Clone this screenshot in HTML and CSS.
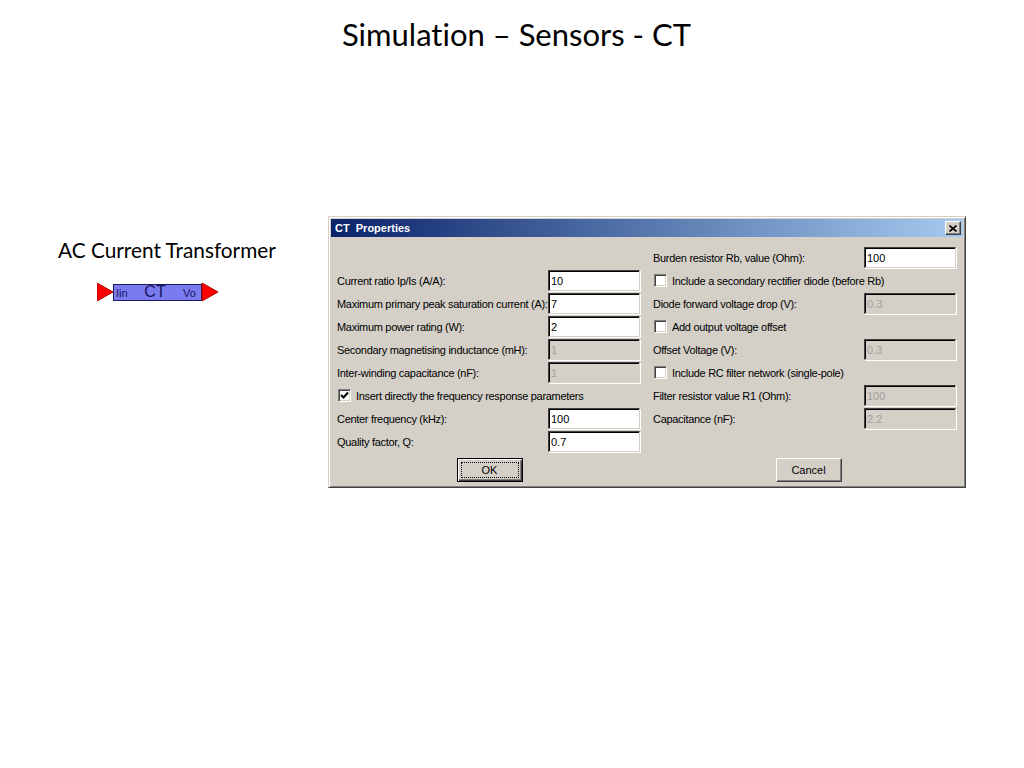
FILE: index.html
```html
<!DOCTYPE html>
<html>
<head>
<meta charset="utf-8">
<title>Simulation – Sensors - CT</title>
<link rel="stylesheet" href="styles.css">
</head>
<body>
<div class="slide">
  <h1 class="title">Simulation – Sensors - CT</h1>
  <div class="content">
    <div class="left">
      <div class="caption">AC Current Transformer</div>
      <svg class="block" width="124" height="21" viewBox="0 0 124 21">
        <polygon points="0,1 16,10 0,19" fill="#ff0000" stroke="#b00000" stroke-width="1"/>
        <rect x="16.5" y="2.5" width="88" height="16" fill="#7b7bf0" stroke="#1c1c5c" stroke-width="1"/>
        <polygon points="105,1 121,10 105,19" fill="#ff0000" stroke="#b00000" stroke-width="1"/>
        <text x="19" y="15" class="pin">Iin</text>
        <text x="58" y="15" class="blk" text-anchor="middle">CT</text>
        <text x="86" y="15" class="pin">Vo</text>
      </svg>
    </div>
    <div class="dialog">
      <div class="titlebar">
        <span class="ttext">CT&nbsp;&nbsp;Properties</span>
        <span class="close"><svg width="8" height="7" viewBox="0 0 8 7"><path d="M0.5 0.5 L7.5 6.5 M7.5 0.5 L0.5 6.5" stroke="#000" stroke-width="1.6"/></svg></span>
      </div>
      <div class="dbody">
        <div class="col">
          <div class="row"></div>
          <div class="row"><span class="lbl">Current ratio Ip/Is (A/A):</span><span class="inp">10</span></div>
          <div class="row"><span class="lbl">Maximum primary peak saturation current (A):</span><span class="inp">7</span></div>
          <div class="row"><span class="lbl">Maximum power rating (W):</span><span class="inp">2</span></div>
          <div class="row"><span class="lbl">Secondary magnetising inductance (mH):</span><span class="inp dis">1</span></div>
          <div class="row"><span class="lbl">Inter-winding capacitance (nF):</span><span class="inp dis">1</span></div>
          <div class="row chkrow"><span class="chk"><svg width="9" height="9" viewBox="0 0 9 9"><path d="M1 4 L3.5 6.5 L8 1.5" fill="none" stroke="#000" stroke-width="2"/></svg></span><span class="lbl">Insert directly the frequency response parameters</span></div>
          <div class="row"><span class="lbl">Center frequency (kHz):</span><span class="inp">100</span></div>
          <div class="row"><span class="lbl">Quality factor, Q:</span><span class="inp">0.7</span></div>
          <div class="btnrow lefts"><span class="btn def"><span class="focus">OK</span></span></div>
        </div>
        <div class="col">
          <div class="row"><span class="lbl">Burden resistor Rb, value (Ohm):</span><span class="inp">100</span></div>
          <div class="row chkrow"><span class="chk"></span><span class="lbl">Include a secondary rectifier diode (before Rb)</span></div>
          <div class="row"><span class="lbl">Diode forward voltage drop (V):</span><span class="inp dis">0.3</span></div>
          <div class="row chkrow"><span class="chk"></span><span class="lbl">Add output voltage offset</span></div>
          <div class="row"><span class="lbl">Offset Voltage (V):</span><span class="inp dis">0.3</span></div>
          <div class="row chkrow"><span class="chk"></span><span class="lbl">Include RC filter network (single-pole)</span></div>
          <div class="row"><span class="lbl">Filter resistor value R1 (Ohm):</span><span class="inp dis">100</span></div>
          <div class="row"><span class="lbl">Capacitance (nF):</span><span class="inp dis">2.2</span></div>
          <div class="row"></div>
          <div class="btnrow right"><span class="btn">Cancel</span></div>
        </div>
      </div>
    </div>
  </div>
</div>
</body>
</html>
```
FILE: styles.css
```css
* { box-sizing: border-box; }
html, body { margin: 0; padding: 0; background: #fff; }
.slide {
  width: 1024px;
  height: 768px;
  background: #fff;
  font-family: Lato, "Open Sans", sans-serif;
  font-variant-ligatures: none;
  color: #000;
  overflow: hidden;
}
.title {
  margin: 0;
  padding-top: 14px;
  padding-left: 9px;
  height: 56px;
  line-height: 40px;
  font-size: 31px;
  font-weight: normal;
  text-align: center;
}
.content {
  display: flex;
  align-items: flex-start;
  margin-top: 160px;
}
.left {
  width: 328px;
  padding-left: 58px;
  padding-top: 22px;
}
.caption {
  font-size: 20.8px;
  line-height: 24px;
  white-space: nowrap;
}
.block {
  display: block;
  margin-top: 20px;
  margin-left: 39px;
}
.pin { font-family: "Liberation Sans", Arial, sans-serif; font-size: 11px; fill: #14145a; }
.blk { font-family: "Liberation Sans", Arial, sans-serif; font-size: 16px; fill: #14145a; }

.dialog {
  width: 638px;
  height: 272px;
  background: #d4d0c8;
  border: 1px solid;
  border-color: #d4d0c8 #404040 #404040 #d4d0c8;
  box-shadow: inset 1px 1px 0 #fff, inset -1px -1px 0 #808080;
  padding: 2px;
  font-family: "Liberation Sans", Arial, sans-serif;
  font-size: 11px;
}
.titlebar {
  height: 18px;
  background: linear-gradient(to right, #0a246a, #a6caf0);
  display: flex;
  align-items: center;
  justify-content: space-between;
  padding: 0 2px 0 4px;
}
.ttext {
  color: #fff;
  font-weight: bold;
  font-size: 11px;
  white-space: nowrap;
}
.close {
  width: 16px;
  height: 14px;
  background: #d4d0c8;
  border: 1px solid;
  border-color: #fff #404040 #404040 #fff;
  box-shadow: inset -1px -1px 0 #808080;
  display: flex;
  align-items: center;
  justify-content: center;
}
.dbody {
  display: flex;
  gap: 13px;
  padding: 9px 6px 0 6px;
}
.col {
  width: 303px;
  display: flex;
  flex-direction: column;
}
.row {
  height: 23px;
  display: flex;
  align-items: center;
  justify-content: space-between;
}
.lbl {
  white-space: nowrap;
  color: #000;
  letter-spacing: -0.3px;
}
.inp {
  flex-shrink: 0;
  width: 92px;
  height: 21px;
  background: #fff;
  border: 1px solid;
  border-color: #404040 #d4d0c8 #d4d0c8 #404040;
  box-shadow: 1px 1px 0 #fff, inset 1px 1px 0 #000;
  padding: 3px 0 0 2px;
  line-height: 14px;
  color: #000;
}
.inp.dis {
  background: #d4d0c8;
  color: #a0a0a0;
}
.chkrow {
  justify-content: flex-start;
  gap: 5px;
}
.chk {
  flex-shrink: 0;
  width: 13px;
  height: 13px;
  margin-left: 1px;
  background: #fff;
  border: 1px solid;
  border-color: #808080 #fff #fff #808080;
  box-shadow: inset 1px 1px 0 #404040, inset -1px -1px 0 #d4d0c8;
  display: flex;
  align-items: center;
  justify-content: center;
}
.btnrow {
  display: flex;
  justify-content: center;
  margin-top: 5px;
}
.btnrow.lefts { padding-left: 2px; }
.btnrow.right { padding-left: 8px; }
.btn {
  width: 66px;
  height: 24px;
  background: #d4d0c8;
  border: 1px solid;
  border-color: #fff #404040 #404040 #fff;
  box-shadow: inset -1px -1px 0 #808080;
  display: flex;
  align-items: center;
  justify-content: center;
  color: #000;
}
.btn.def {
  border: 1px solid #000;
  box-shadow: inset 1px 1px 0 #fff, inset -1px -1px 0 #404040, inset -2px -2px 0 #808080;
  padding: 3px;
}
.focus {
  flex: 1;
  align-self: stretch;
  border: 1px dotted #000;
  display: flex;
  align-items: center;
  justify-content: center;
}
```
